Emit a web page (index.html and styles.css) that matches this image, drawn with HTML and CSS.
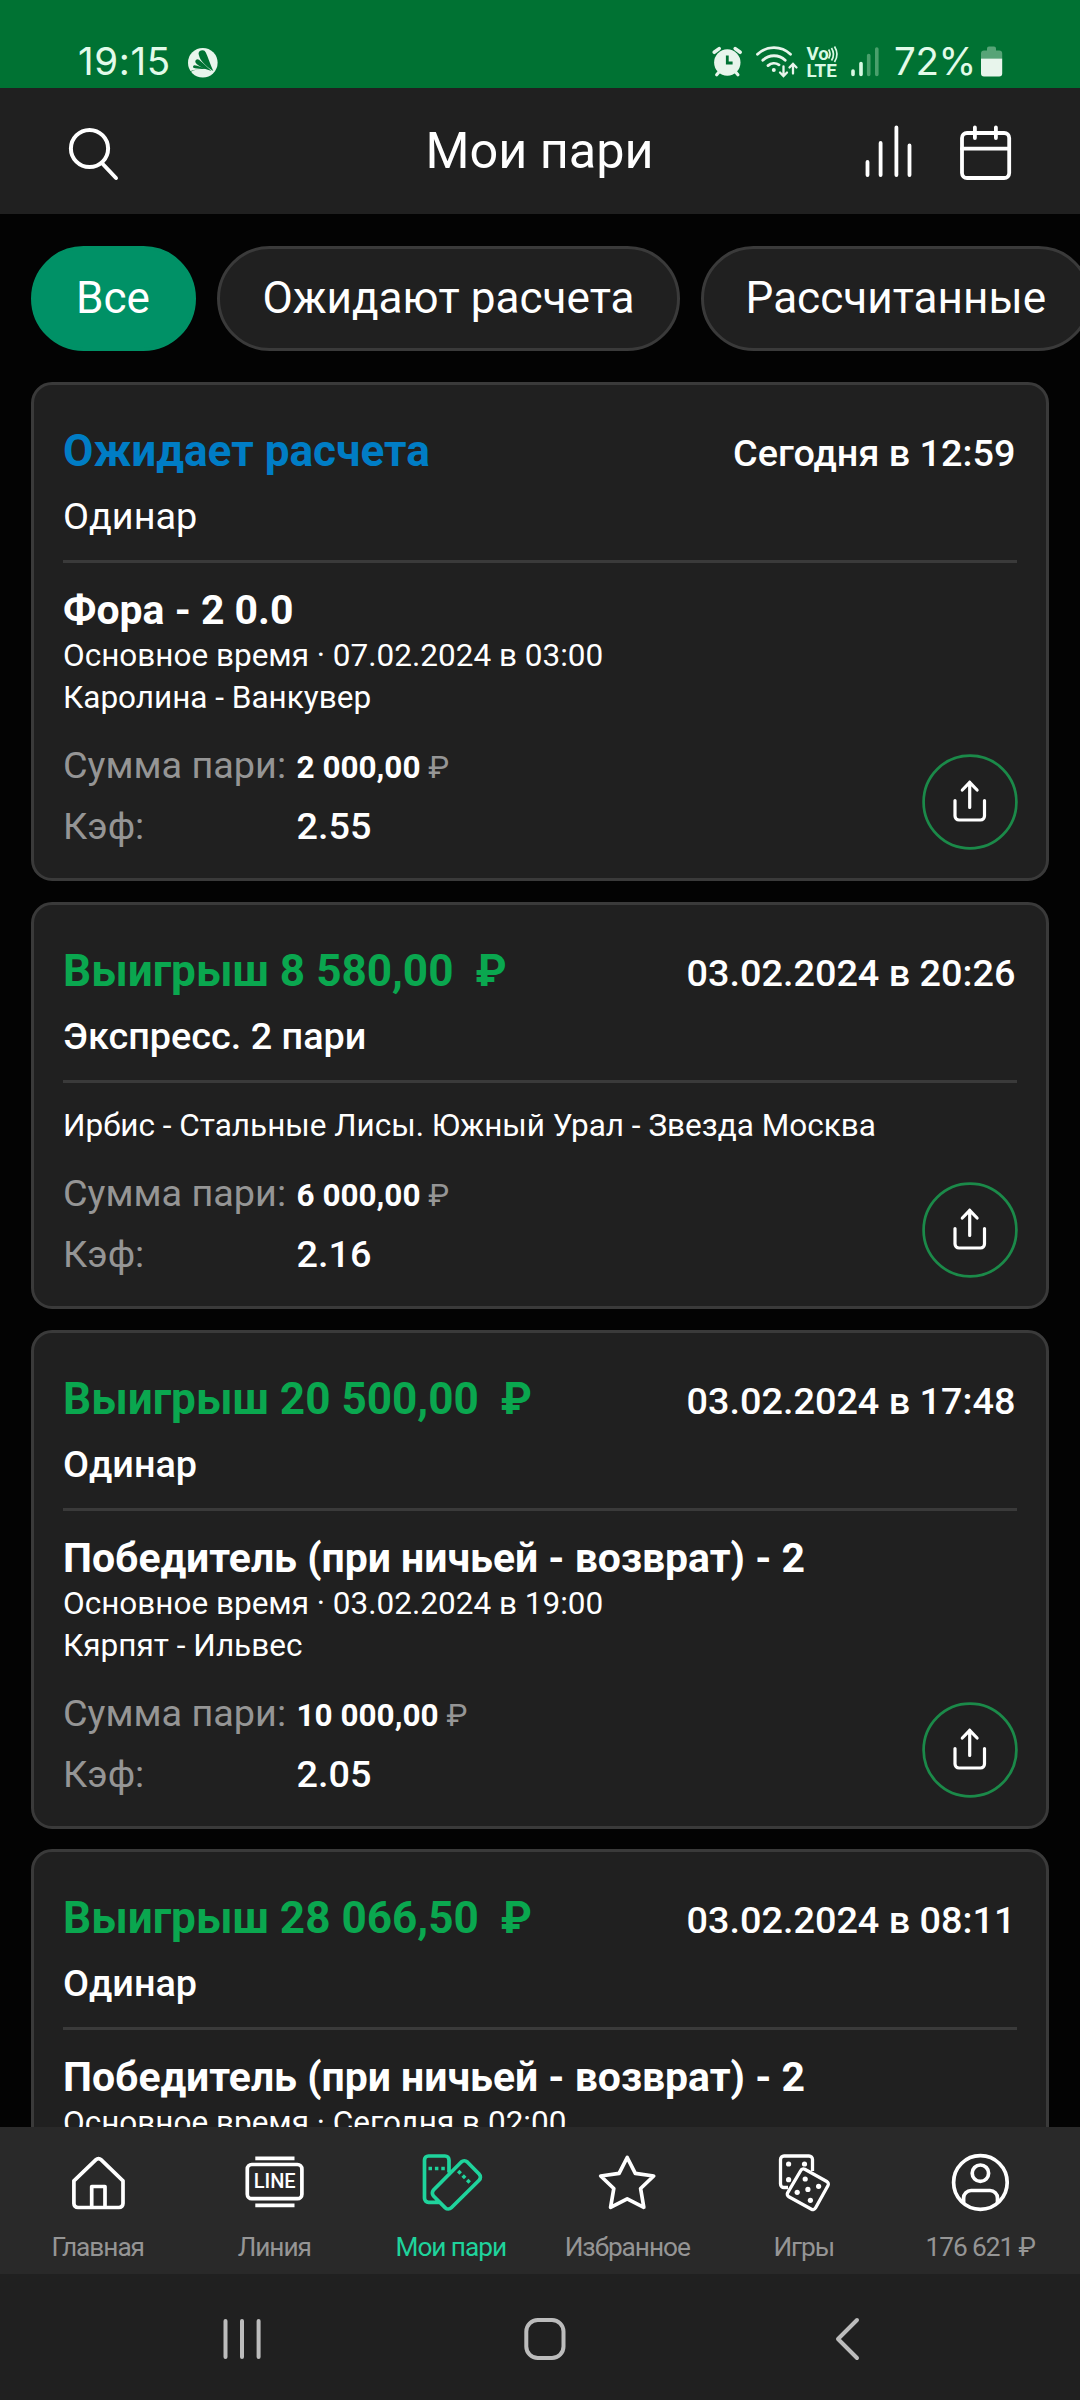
FILE: index.html
```
<!DOCTYPE html>
<html lang="ru">
<head>
<meta charset="utf-8">
<title>Мои пари</title>
<link rel="stylesheet" href="styles.css">
</head>
<body>
<svg class="defs" width="0" height="0">
  <symbol id="share" viewBox="0 0 96 96">
    <circle cx="48" cy="48" r="46.4" fill="none" stroke="#1b8a49" stroke-width="2.7"/>
    <path d="M33 46.5V62a4 4 0 0 0 4 4h21.500a4 4 0 0 0 4-4V46.500M47.700 53.500V28M40.300 36l7.400-7.700 7.400 7.700" fill="none" stroke="#fff" stroke-width="3.200" stroke-linecap="round" stroke-linejoin="round"/>
  </symbol>
</svg>
<div class="screen">
  <div class="status">
    <span class="clock">19:15</span>
    <svg class="glyph" width="40" height="88" viewBox="183 0 40 88">
      <circle cx="202.800" cy="62.700" r="14.800" fill="#e8f5ec"/>
      <g fill="#007233">
        <path d="M213.300 71C207 67 200 61 199 55.500A3.700 3.700 0 0 1 205.800 52.500C208 57 210 64 213.300 71Z"/>
        <path d="M211.500 71C206 69.500 198 66.500 195.500 62.500A2.300 2.300 0 0 1 199 59.700C203 62.500 207 67 211.500 71Z"/>
        <path d="M207 68.800C201 69 196 69 193.500 67.800A1.500 1.500 0 0 1 194.500 65.200C198 65.500 202 67.500 207 68.800Z"/>
        <path d="M187 73.300C190 70.500 195 69.500 201 69L196 69.700C192 70.500 190 72 189 74.500Z"/>
      </g>
    </svg>
    <div class="status-right">
      <svg class="glyph" width="184" height="88" viewBox="706 0 184 88">
        <g fill="#e8f5ec">
          <circle cx="727.300" cy="62.500" r="13.200"/>
        </g>
        <g stroke="#e8f5ec" fill="none" stroke-linecap="round">
          <path d="M714.200 52.300l5-3.700M740.200 52.300l-5-3.700" stroke-width="3.600"/>
          <path d="M719 72l-2.300 2.700M735.600 72l2.300 2.700" stroke-width="3.200"/>
          <path d="M727.300 55.500V63h5.300" stroke="#007233" stroke-width="2.800" stroke-linecap="butt"/>
          <path d="M757.500 54.300a23.500 23.500 0 0 1 33 0M762.800 60.300a16 16 0 0 1 22.400 0M768 65.600a9 9 0 0 1 11-.8" stroke-width="2.800"/>
          <path d="M783.500 66.500v9M780 72.500l3.500 3.700 3.500-3.700M793 73.500v-9M789.500 67.500l3.500-3.700 3.500 3.700" stroke-width="2.300"/>
        </g>
        <circle cx="773.800" cy="70" r="2" fill="#e8f5ec"/>
        <text class="lte" x="806.500" y="60">Vo</text>
        <path d="M828.600 49.500q3 4.500 0 9M831.500 48q4 6.500 0 12.500M834.500 46.500q5 8 0 15.500" fill="none" stroke="#d8fae4" stroke-width="1.700"/>
        <text class="lte" x="806.500" y="77.300">LTE</text>
        <g stroke-width="3.600" stroke-linecap="round">
          <path d="M853 71v3.500M861 63.500v11" stroke="#d8fae4"/>
          <path d="M868.700 55.500v19M876.800 49v25.500" stroke="#4aa06c"/>
        </g>
      </svg>
      <span class="percent">72%</span>
      <svg class="glyph" width="26" height="88" viewBox="978 0 26 88">
        <path d="M981 58.500V53.500a3 3 0 0 1 3-3h3V48.500a2 2 0 0 1 2-2h5a2 2 0 0 1 2 2V50.500h3.200a3 3 0 0 1 3 3V58.500Z" fill="#57a477"/>
        <path d="M981 58.500H1002.200V73.500a3 3 0 0 1-3 3H984a3 3 0 0 1-3-3Z" fill="#e8f5ec"/>
      </svg>
    </div>
  </div>

  <header class="header">
    <svg class="glyph" width="56" height="126" viewBox="66 88 56 126" fill="none" stroke="#fff" stroke-width="4" stroke-linecap="round">
      <circle cx="89.500" cy="148.500" r="18.600"/><path d="M102.300 163.500L116 178"/>
    </svg>
    <h1 class="title">Мои пари</h1>
    <svg class="glyph" width="154" height="126" viewBox="861 88 154 126" fill="none" stroke="#fff" stroke-width="3.800" stroke-linecap="round">
      <path d="M867.500 162v13M880.600 143v32M896.400 127.500v47.500M909.500 145.500v29.500"/>
      <rect x="962" y="133" width="47.200" height="45" rx="5"/>
      <path d="M962 148.700h47M974.900 127.500v10.500M995.900 127.500v10.500"/>
    </svg>
  </header>

  <nav class="chips">
    <span class="chip chip-active">Все</span>
    <span class="chip">Ожидают расчета</span>
    <span class="chip">Рассчитанные</span>
  </nav>

  <main class="list">
    <article class="card">
      <div class="top"><span class="state pending">Ожидает расчета</span><time class="date">Сегодня в 12:59</time></div>
      <div class="kind kind-light">Одинар</div>
      <div class="rule"></div>
      <h2 class="event">Фора - 2 0.0</h2>
      <p class="meta">Основное время · 07.02.2024 в 03:00</p>
      <p class="meta">Каролина - Ванкувер</p>
      <div class="foot">
        <div class="figures">
          <span class="label">Сумма пари:</span><span class="sum"><b>2 000,00</b> ₽</span>
          <span class="label">Кэф:</span><span class="odds">2.55</span>
        </div>
        <svg class="share"><use href="#share"/></svg>
      </div>
    </article>

    <article class="card">
      <div class="top"><span class="state won">Выигрыш 8 580,00&nbsp;&nbsp;₽</span><time class="date">03.02.2024 в 20:26</time></div>
      <div class="kind">Экспресс. 2 пари</div>
      <div class="rule"></div>
      <p class="meta">Ирбис - Стальные Лисы. Южный Урал - Звезда Москва</p>
      <div class="foot">
        <div class="figures">
          <span class="label">Сумма пари:</span><span class="sum"><b>6 000,00</b> ₽</span>
          <span class="label">Кэф:</span><span class="odds">2.16</span>
        </div>
        <svg class="share"><use href="#share"/></svg>
      </div>
    </article>

    <article class="card">
      <div class="top"><span class="state won">Выигрыш 20 500,00&nbsp;&nbsp;₽</span><time class="date">03.02.2024 в 17:48</time></div>
      <div class="kind">Одинар</div>
      <div class="rule"></div>
      <h2 class="event">Победитель (при ничьей - возврат) - 2</h2>
      <p class="meta">Основное время · 03.02.2024 в 19:00</p>
      <p class="meta">Кярпят - Ильвес</p>
      <div class="foot">
        <div class="figures">
          <span class="label">Сумма пари:</span><span class="sum"><b>10 000,00</b> ₽</span>
          <span class="label">Кэф:</span><span class="odds">2.05</span>
        </div>
        <svg class="share"><use href="#share"/></svg>
      </div>
    </article>

    <article class="card">
      <div class="top"><span class="state won">Выигрыш 28 066,50&nbsp;&nbsp;₽</span><time class="date">03.02.2024 в 08:11</time></div>
      <div class="kind">Одинар</div>
      <div class="rule"></div>
      <h2 class="event">Победитель (при ничьей - возврат) - 2</h2>
      <p class="meta">Основное время · Сегодня в 02:00</p>
    </article>
  </main>

  <nav class="tabs">
    <a class="tab">
      <svg class="tab-icon" viewBox="68 2150 61 66">
        <path d="M73.900 2203.500V2180.800L96 2159.700a3.600 3.600 0 0 1 5 0L123 2180.800V2203.500a4 4 0 0 1-4 4H77.900a4 4 0 0 1-4-4ZM91.700 2207V2186.500H105V2207"/>
      </svg>
      <span>Главная</span>
    </a>
    <a class="tab">
      <svg class="tab-icon" viewBox="244.500 2150 61 66">
        <path d="M255.800 2158.400H295M255.800 2205.300H295"/><rect x="247.800" y="2164.500" width="54.600" height="34.200" rx="4.500"/>
        <text class="line-text" x="254.200" y="2188.200">LINE</text>
      </svg>
      <span>Линия</span>
    </a>
    <a class="tab tab-active">
      <svg class="tab-icon" viewBox="421.500 2150 61 66">
        <path d="M441 2202.300H429a4 4 0 0 1-4-4V2160a4 4 0 0 1 4-4H445.500a4 4 0 0 1 4 4V2172.500M461.800 2162a4.500 4.500 0 0 1 6 0L479.600 2174a4.500 4.500 0 0 1 0 6.300L451.800 2207.800a4.300 4.300 0 0 1-6 0L434 2196a4.500 4.500 0 0 1 0-6Z"/>
        <path class="dots" d="M429 2168.500h3.500m2.900 0h3.500m2.900 0h3.500M458.700 2171l2.500 2.500m2 2l2.500 2.500m2 2l2.500 2.500"/>
      </svg>
      <span>Мои пари</span>
    </a>
    <a class="tab">
      <svg class="tab-icon" viewBox="598 2150 61 66">
        <path d="M628.200 2157.500L636.300 2173.300 654.700 2176 641.600 2188.500 644.800 2207.300 628.200 2198.800 611.600 2207.300 614.800 2188.500 601.700 2176 620.100 2173.300Z"/>
      </svg>
      <span>Избранное</span>
    </a>
    <a class="tab">
      <svg class="tab-icon" viewBox="774 2150 61 66">
        <g class="thin"><path d="M788 2187.500H784a3.500 3.500 0 0 1-3.500-3.500V2159.500a3.500 3.500 0 0 1 3.500-3.500H809a3.500 3.500 0 0 1 3.500 3.500V2171"/>
        <path d="M800.800 2170.500a3 3 0 0 1 4-1.200L826.800 2181.500a3 3 0 0 1 1.200 4L815.500 2208a3 3 0 0 1-4 1.200L788.800 2196.800a3 3 0 0 1-1.200-4Z"/></g>
        <g class="pips"><circle cx="788.600" cy="2164" r="2.600"/><circle cx="804.500" cy="2164" r="2.600"/><circle cx="788.600" cy="2179.700" r="2.600"/><circle cx="805.200" cy="2179" r="2.600"/><circle cx="818.600" cy="2186.300" r="2.600"/><circle cx="807.900" cy="2189.400" r="2.600"/><circle cx="797.200" cy="2192.300" r="2.600"/><circle cx="810.400" cy="2200.300" r="2.600"/></g>
      </svg>
      <span>Игры</span>
    </a>
    <a class="tab">
      <svg class="tab-icon" viewBox="950 2150 61 66">
        <circle cx="980.400" cy="2182.500" r="26.800"/><circle cx="980.400" cy="2173.200" r="8.200"/>
        <path d="M963.600 2203V2198a7.500 7.500 0 0 1 7.500-7.500H990a7.500 7.500 0 0 1 7.500 7.500V2203"/>
      </svg>
      <span>176 621 ₽</span>
    </a>
  </nav>

  <div class="system">
    <svg width="44" height="50" viewBox="220 2315 44 50"><path d="M225.500 2322v36M242 2322v36M258.600 2322v36"/></svg>
    <svg width="50" height="50" viewBox="519 2315 50 50"><rect x="525.300" y="2321" width="37.200" height="38" rx="11.500"/></svg>
    <svg width="44" height="50" viewBox="825 2315 44 50"><path d="M857 2321L838 2340 857 2359"/></svg>
  </div>
</div>
</body>
</html>
```
FILE: styles.css
```
body { margin: 0; background: #030303; font-family: Roboto, "Noto Sans", sans-serif; color: #fff; }
h1, h2, p { margin: 0; }
.defs { display: block; }
.screen { width: 1080px; height: 2400px; overflow: hidden; display: flex; flex-direction: column; background: #030303; }
.glyph { display: block; flex: none; }

.status { flex: none; height: 88px; display: flex; background: #007233; font-family: Inter, Roboto, sans-serif; font-size: 38.5px; line-height: 122px; color: #e2fbea; }
.clock { width: 105px; padding-left: 78px; letter-spacing: 0.6px; }
.status-right { margin-left: auto; padding-right: 76px; display: flex; }
.percent { width: 84px; padding-left: 4px; letter-spacing: -0.4px; }
.lte { font: 700 18.8px Roboto, sans-serif; fill: #d8fae4; }

.header { flex: none; height: 126px; padding: 0 65px 0 66px; display: flex; justify-content: space-between; background: #202020; }
.title { font-size: 50.4px; font-weight: 400; line-height: 126px; margin-left: 96px; }

.chips { flex: none; display: flex; gap: 21px; padding: 32px 0 31px 31px; }
.chip { flex: none; box-sizing: border-box; height: 105px; padding: 0 42px; border: 3px solid #3a3a3a; border-radius: 53px; background: #202020; font-size: 44.1px; line-height: 98px; }
.chip-active { border-color: #009166; background: #009166; padding: 0 43.500px 0 42px; }

.list { flex: 1; min-height: 0; overflow: hidden; padding: 0 31px; display: flex; flex-direction: column; gap: 21px; }
.card { flex: none; box-sizing: border-box; padding: 40px 29px 28px; border: 3px solid #3a3a3a; border-radius: 21px; background: #202020; }
.card:last-child { margin-top: -1px; }
.top { display: flex; justify-content: space-between; height: 52px; line-height: 52px; }
.state { font-size: 44.1px; font-weight: 700; }
.pending { color: #007dc5; }
.won { color: #0aa74f; }
.date { padding-right: 1.5px; font-size: 37.8px; font-weight: 500; line-height: 56px; }
.kind { margin-top: 17px; font-size: 37.8px; font-weight: 500; line-height: 44px; }
.kind-light { font-weight: 400; }
.rule { height: 3px; margin: 22px 0; background: #3a3a3a; }
.event { font-size: 40.95px; font-weight: 700; line-height: 50px; }
.meta { font-size: 31.5px; line-height: 42px; }
.foot { display: flex; justify-content: space-between; align-items: flex-end; height: 107px; margin-top: 24px; }
.figures { display: grid; grid-template-columns: 233.5px auto; row-gap: 14px; align-self: flex-start; line-height: 44px; align-items: baseline; font-size: 37.8px; color: #959595; }
.sum { font-size: 31.5px; }
.sum b { color: #fff; }
.odds { color: #fff; font-weight: 500; }
.share { display: block; width: 96px; height: 96px; margin-right: -1px; }

.tabs { flex: none; height: 147px; display: grid; grid-template-columns: repeat(6, 1fr); padding: 0 11px 0 10px; box-sizing: border-box; background: #292929; }
.tab { display: flex; flex-direction: column; align-items: center; padding-top: 23px; font-size: 26.25px; letter-spacing: -1.05px; line-height: 30px; color: #959595; }
.tab span { margin: 16px 1px 0 0; }
.tab-active { color: #1fd39c; }
.tab-icon { display: block; width: 61px; height: 66px; overflow: visible; fill: none; stroke: #fff; stroke-width: 3.700; stroke-linejoin: round; }
.tab-active .tab-icon { stroke: #1fd39c; }
.tab-icon .dots { stroke-width: 3.500; }
.tab-icon .thin { stroke-width: 3.300; }
.tab-icon .pips { fill: #fff; stroke: none; }
.line-text { font: 500 20px Roboto, sans-serif; letter-spacing: 0; fill: #fff; stroke: none; }

.system { flex: none; height: 126px; display: flex; align-items: center; padding: 3px 211px 0 220px; justify-content: space-between; box-sizing: border-box; background: #202020; }
.system svg { fill: none; stroke: #bcbcbc; stroke-width: 4; stroke-linecap: round; stroke-linejoin: round; }
```
